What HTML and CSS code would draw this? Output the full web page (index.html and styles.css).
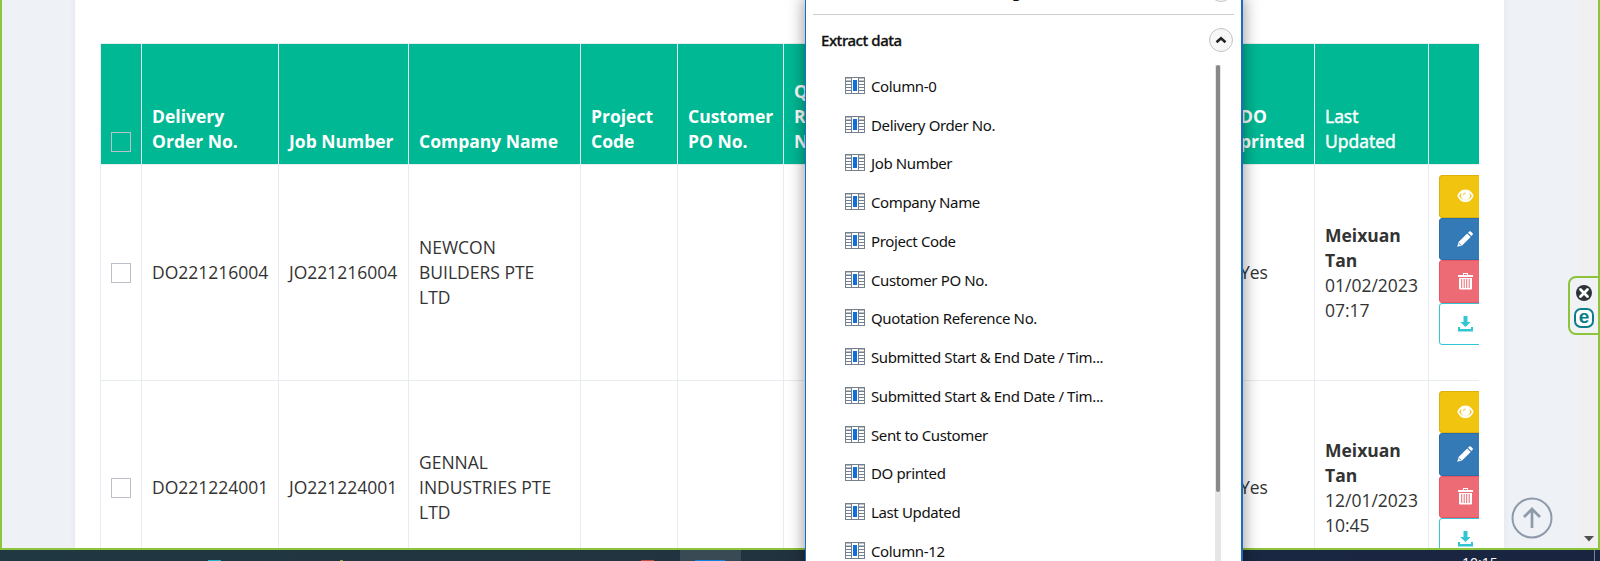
FILE: index.html
```html
<!DOCTYPE html>
<html lang="en">
<head>
<meta charset="utf-8">
<title>Delivery Orders</title>
<link rel="stylesheet" href="styles.css">
</head>
<body>
<svg class="defs" aria-hidden="true">
  <symbol id="i-col" viewBox="0 0 20 17"><path fill="#74808b" d="M0 0h20v17H0z"/><path fill="#fff" d="M1 1.500h5v2H1zM1 5h5v2H1zM1 8h5v2H1zM1 11h5v2H1zM1 14h5v2H1zM14 1.500h5v2h-5zM14 5h5v2h-5zM14 8h5v2h-5zM14 11h5v2h-5zM14 14h5v2h-5zM7 1h6v15H7z"/><path fill="#0f6fe0" d="M8 3h4v11H8z"/></symbol>
  <symbol id="i-eye" viewBox="0 0 17 14"><path fill="#fff" fill-rule="evenodd" d="M8.500 .5C4.500.5 1.500 3.500.3 6.800 1.800 10.500 4.800 13.300 8.500 13.300s6.700-2.800 8.200-6.500C15.500 3.500 12.500.5 8.500.5zM5.100 3.400A8 8 0 0 0 2.200 6.800C3.400 9.500 5.600 11.200 8.500 11.200s5.100-1.700 6.300-4.400a8 8 0 0 0-2.900-3.400 4.600 4.600 0 1 1-6.800 0z"/><circle cx="8.500" cy="6.200" r="3.400" fill="#fff"/><path d="M6.500 6a2 2 0 0 1 2-2" stroke="#f1c40f" stroke-width="1" fill="none"/></symbol>
  <symbol id="i-pen" viewBox="0 0 16 16"><path fill="#fff" d="M.3 15.700 1.600 11.100 10.200 2.500l3.500 3.500-8.600 8.600zM11 1.700 12.200.5q.8-.7 1.600 0l1.800 1.800q.7.800 0 1.500L14.400 5z"/><path stroke="#337ab7" d="m2 12.300 1.900 1.900" fill="none"/></symbol>
  <symbol id="i-trash" viewBox="0 0 15 17"><path fill="#fff" fill-rule="evenodd" d="M5 0h5v2h5v2H0V2h5zM6 1v1h3V1zM1 5h13v10.500q0 1-1 1H2q-1 0-1-1zM3.200 6v9h1V6zM5.700 6v9h1V6zM8.200 6v9h1V6zM10.700 6v9h1V6z"/></symbol>
  <symbol id="i-down" viewBox="0 0 15 16"><path fill="#32c5d2" d="M5.500 0h4v6h3.200L7.500 11 2.300 6h3.200zM0 11h2v2h11v-2h2v4.500H0z"/></symbol>
</svg>

<div class="desktop">
  <div class="browser">
    <main class="page">
      <section class="card">
        <div class="table-wrap">
          <table class="orders">
            <colgroup><col class="c-check"><col class="c-do"><col class="c-job"><col class="c-company"><col class="c-project"><col class="c-po"><col class="c-quote"><col class="c-start"><col class="c-end"><col class="c-sent"><col class="c-printed"><col class="c-updated"><col class="c-actions"></colgroup>
            <thead><tr>
              <th><span class="box"></span></th><th>Delivery Order No.</th><th>Job Number</th><th>Company Name</th><th>Project Code</th><th>Customer PO No.</th><th>Quotation<br>Reference<br>No.</th><th></th><th></th><th></th><th>DO printed</th><th class="semi">Last Updated</th><th></th>
            </tr></thead>
            <tbody>
              <tr class="first">
                <td><span class="box"></span></td><td>DO221216004</td><td>JO221216004</td><td>NEWCON BUILDERS PTE LTD</td><td></td><td></td><td></td><td></td><td></td><td></td><td>Yes</td><td><b>Meixuan Tan</b><br>01/02/2023 07:17</td>
                <td class="actions"><div class="btns"><span class="btn view"><svg width="17" height="14"><use href="#i-eye"/></svg></span><span class="btn edit"><svg width="16" height="16"><use href="#i-pen"/></svg></span><span class="btn del"><svg width="15" height="17"><use href="#i-trash"/></svg></span><span class="btn dl"><svg width="15" height="16"><use href="#i-down"/></svg></span></div></td>
              </tr>
              <tr>
                <td><span class="box"></span></td><td>DO221224001</td><td>JO221224001</td><td>GENNAL INDUSTRIES PTE LTD</td><td></td><td></td><td></td><td></td><td></td><td></td><td>Yes</td><td><b>Meixuan Tan</b><br>12/01/2023 10:45</td>
                <td class="actions"><div class="btns"><span class="btn view"><svg width="17" height="14"><use href="#i-eye"/></svg></span><span class="btn edit"><svg width="16" height="16"><use href="#i-pen"/></svg></span><span class="btn del"><svg width="15" height="17"><use href="#i-trash"/></svg></span><span class="btn dl"><svg width="15" height="16"><use href="#i-down"/></svg></span></div></td>
              </tr>
            </tbody>
          </table>
        </div>
      </section>
    </main>
    <div class="scroll"><svg width="10" height="6" viewBox="0 0 10 6"><path fill="#505050" d="M0 0h10L5 5.500z"/></svg></div>
    <svg class="totop" width="42" height="42" viewBox="0 0 42 42" fill="none" stroke="#8e9aaa"><circle cx="21" cy="21" r="19.500" stroke-width="2"/><path stroke-width="2.700" d="M21 31V13M13 20l8-8 8 8"/></svg>
  </div>
  <footer class="taskbar">
    <span class="dot cyan"></span><span class="dot yellow"></span><span class="dot red"></span><span class="active"><i></i></span>
    <span class="clock">10:15</span><span class="peek"></span>
  </footer>
</div>

<aside class="widget">
  <svg width="16" height="16" viewBox="0 0 16 16"><circle cx="8" cy="8" r="8" fill="#2d333a"/><path d="m4.500 4.500 7 7m0-7-7 7" stroke="#fff" stroke-width="2.800" stroke-linecap="round"/></svg>
  <span class="e">e</span>
</aside>

<aside class="popup">
  <div class="prev"><span class="prev-title">Manage</span><span class="round"></span></div>
  <div class="head"><h2>Extract data</h2><span class="round"><svg width="12" height="8" viewBox="0 0 12 8"><path d="m1.500 6.200 4.500-4 4.500 4" fill="none" stroke="#222" stroke-width="2.600"/></svg></span></div>
  <div class="body">
    <ul>
      <li><svg><use href="#i-col"/></svg><span>Column-0</span></li>
      <li><svg><use href="#i-col"/></svg><span>Delivery Order No.</span></li>
      <li><svg><use href="#i-col"/></svg><span>Job Number</span></li>
      <li><svg><use href="#i-col"/></svg><span>Company Name</span></li>
      <li><svg><use href="#i-col"/></svg><span>Project Code</span></li>
      <li><svg><use href="#i-col"/></svg><span>Customer PO No.</span></li>
      <li><svg><use href="#i-col"/></svg><span>Quotation Reference No.</span></li>
      <li><svg><use href="#i-col"/></svg><span>Submitted Start &amp; End Date / Tim...</span></li>
      <li><svg><use href="#i-col"/></svg><span>Submitted Start &amp; End Date / Tim...</span></li>
      <li><svg><use href="#i-col"/></svg><span>Sent to Customer</span></li>
      <li><svg><use href="#i-col"/></svg><span>DO printed</span></li>
      <li><svg><use href="#i-col"/></svg><span>Last Updated</span></li>
      <li><svg><use href="#i-col"/></svg><span>Column-12</span></li>
    </ul>
    <div class="track"><div class="thumb"></div></div>
  </div>
</aside>
</body>
</html>
```

FILE: styles.css
```css
* { box-sizing: border-box; }
body { margin: 0; height: 561px; overflow: hidden; position: relative; font: 17.5px/25px "Open Sans", sans-serif; color: #333; }
.defs { position: absolute; width: 0; height: 0; }
.desktop { height: 561px; display: flex; flex-direction: column; }
.browser { height: 550px; flex: none; display: flex; position: relative; border: solid #8cc43c; border-width: 0 2px 2px; background: #eef1f6; overflow: hidden; }
.page { flex: 1; min-width: 0; padding-left: 73px; padding-right: 75px; }
.card { height: 548px; background: #fff; padding: 43px 25px 0; box-shadow: 0 0 5px 1px rgba(70,80,110,.06); }
.table-wrap { height: 505px; overflow: hidden; }
.orders { table-layout: fixed; width: 1455px; border-collapse: separate; border-spacing: 0; border: solid #e7ecf1; border-width: 1px 0 0 1px; }
.c-check { width: 41px; } .c-do { width: 137px; } .c-job { width: 130px; } .c-company { width: 172px; }
.c-project { width: 97px; } .c-po { width: 106px; } .c-quote { width: 110px; } .c-start, .c-end { width: 120px; }
.c-sent { width: 96px; } .c-printed { width: 85px; } .c-updated { width: 114px; } .c-actions { width: 126px; }
th, td { padding: 10px; text-align: left; border: solid #e7ecf1; border-width: 0 1px 1px 0; }
th { height: 121px; background: #00b894; color: #fff; font-weight: 700; vertical-align: bottom; }
th.semi { font-weight: 400; -webkit-text-stroke: .5px #fff; }
td { height: 214px; vertical-align: middle; }
.first td { height: 216px; }
b { font-weight: 700; }
.box { display: block; width: 20px; height: 20px; border: 1px solid #bcc0c8; }
th .box { margin-bottom: 2px; }
td.actions { padding-top: 10px; vertical-align: top; }
.btns { width: 52px; display: flex; flex-direction: column; }
.btn { height: 42.300px; display: flex; align-items: center; justify-content: center; border: 1px solid; border-radius: 3px; }
.first .btn { height: 42.500px; }
.view { background: #f1c40f; border-color: #dab10d; }
.edit { background: #337ab7; border-color: #2a6fa9; }
.del { background: #ed6b75; border-color: #ea5460; }
.dl { border-color: #32c5d2; }
.scroll { width: 19px; flex: none; background: #f0f0f0; display: flex; align-items: flex-end; justify-content: center; padding: 0 0 6px 1px; }
.totop { position: absolute; left: 1508.500px; top: 497px; }
.taskbar { height: 11px; background: linear-gradient(90deg, #203841, #21323f 50%, #1a2742 78%, #192440); position: relative; overflow: hidden; }
.dot { position: absolute; top: 10px; height: 1px; width: 13px; }
.cyan { left: 208px; background: #28b4c8; } .yellow { left: 340px; width: 3px; background: #a69b3c; } .red { left: 641px; background: #cc4a40; }
.active { position: absolute; left: 680px; width: 61px; height: 11px; background: #394a55; }
.active i { position: absolute; left: 15px; top: 10px; width: 30px; height: 1px; background: #1282e0; }
.clock { position: absolute; left: 1462px; top: 3px; color: #fff; font-size: 14px; line-height: 19px; }
.peek { position: absolute; left: 1594px; width: 1px; height: 11px; background: #7b8290; }
.widget { position: absolute; left: 1568px; top: 276px; width: 32px; height: 59px; border: 2px solid #8cc43c; border-radius: 8px 0 0 8px; background: #f1f2f4; display: flex; flex-direction: column; align-items: center; gap: 7px; padding-top: 7px; }
.e { width: 20px; height: 20px; flex: none; border: 2px solid #0a7f8c; border-radius: 7px; background: #fff; color: #0a7f8c; font: bold 19px/13px "Liberation Sans", sans-serif; text-align: center; }
.popup { position: absolute; left: 805px; top: -2px; width: 438px; height: 580px; background: #fff; border: solid #1a6ec0; border-width: 0 2px 0 1px; box-shadow: 0 0 15px 1px rgba(0,0,0,.4); color: #111; font: 15px/20px "Noto Sans", sans-serif; }
.prev { height: 17px; margin: 0 7px; border-bottom: 1px solid #ccc; display: flex; justify-content: flex-end; align-items: flex-end; padding: 0 1px 12px 0; }
.prev-title { margin-right: 179px; font-weight: 600; }
.round { width: 24px; height: 24px; border: 1px solid #c4c4c4; border-radius: 50%; background: #f7f7f7; display: flex; align-items: center; justify-content: center; flex: none; }
.head { height: 49px; display: flex; align-items: center; justify-content: space-between; padding: 0 8px 0 15px; }
h2 { margin: 0; font-size: 15px; font-weight: 500; letter-spacing: -.45px; -webkit-text-stroke: .3px #111; }
.body { display: flex; justify-content: space-between; padding-right: 20px; margin-top: 1px; }
ul { list-style: none; margin: 0; padding: 1px 0 0 39px; }
li { height: 38.750px; display: flex; align-items: center; gap: 6px; }
li svg { width: 20px; height: 17px; }
li span { margin-top: 1px; white-space: nowrap; letter-spacing: -.37px; }
.track { width: 6px; height: 520px; background: #e6e6e6; }
.thumb { width: 4px; height: 427px; margin-left: 1px; background: #888; border-radius: 2px; }
```
